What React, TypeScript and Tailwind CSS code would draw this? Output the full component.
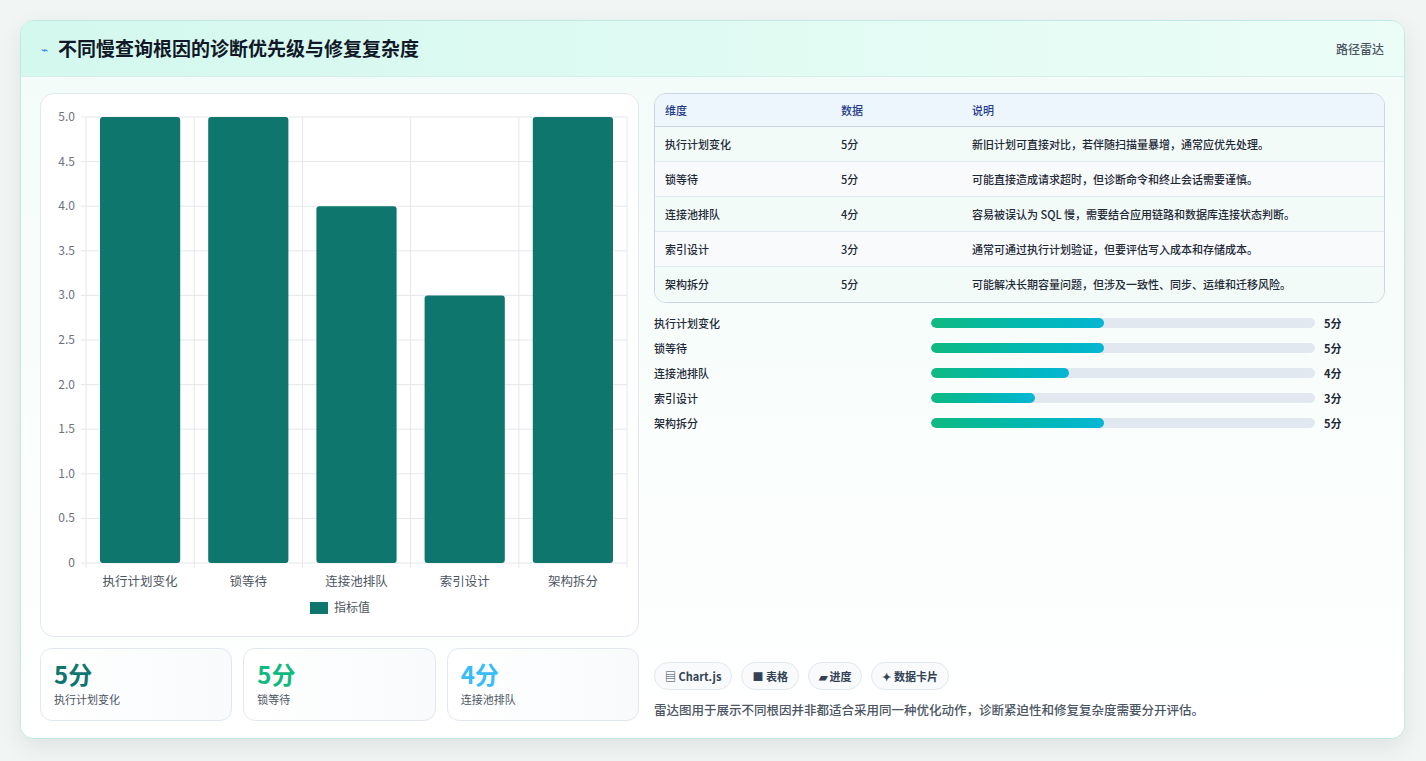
const ROWS = [
  { name: "执行计划变化", v: 5, desc: "新旧计划可直接对比，若伴随扫描量暴增，通常应优先处理。" },
  { name: "锁等待", v: 5, desc: "可能直接造成请求超时，但诊断命令和终止会话需要谨慎。" },
  { name: "连接池排队", v: 4, desc: "容易被误认为 SQL 慢，需要结合应用链路和数据库连接状态判断。" },
  { name: "索引设计", v: 3, desc: "通常可通过执行计划验证，但要评估写入成本和存储成本。" },
  { name: "架构拆分", v: 5, desc: "可能解决长期容量问题，但涉及一致性、同步、运维和迁移风险。" },
];

const FONT = { fontFamily: '"Noto Sans CJK SC", "Noto Sans", sans-serif' };

function Chart() {
  const W = 596, H = 543;
  const x0 = 45, x1 = 586, yTop = 23, yBot = 469;
  const step = (x1 - x0) / 5;
  const ticks = [0, 0.5, 1, 1.5, 2, 2.5, 3, 3.5, 4, 4.5, 5];
  const y = (v: number) => yBot - (v / 5) * (yBot - yTop);
  return (
    <svg width={W} height={H} className="block">
      {ticks.map((t) => (
        <g key={t}>
          <line x1={x0 - 5} x2={x1} y1={y(t)} y2={y(t)} stroke="#e5e7eb" />
          <text x={x0 - 11} y={y(t) + 4} textAnchor="end" fontSize="12" fill="#6b7280" style={FONT}>
            {t.toFixed(t === 0 ? 0 : 1)}
          </text>
        </g>
      ))}
      {[0, 1, 2, 3, 4, 5].map((i) => (
        <line key={i} x1={x0 + i * step} x2={x0 + i * step} y1={yTop} y2={yBot + 5} stroke="#e5e7eb" />
      ))}
      {ROWS.map((r, i) => (
        <g key={r.name}>
          <rect x={x0 + i * step + 14} y={y(r.v)} width={step - 28} height={yBot - y(r.v)} rx="3" fill="#0f766e" />
          <text x={x0 + i * step + step / 2} y={yBot + 23} textAnchor="middle" fontSize="12.5" fill="#4b5563" style={FONT}>
            {r.name}
          </text>
        </g>
      ))}
      <rect x={269} y={508} width={18} height={12} fill="#0f766e" />
      <text x={293} y={518} fontSize="12" fill="#4b5563" style={FONT}>指标值</text>
    </svg>
  );
}

export default function App() {
  return (
    <div className="w-[1426px] h-[761px] bg-[#f1f5f4] pt-[20px] px-[20px]" style={FONT}>
      <div className="w-[1385px] h-[719px] rounded-[14px] border border-[#bfe9e2] bg-white shadow-[0_8px_24px_rgba(0,0,0,0.08)] overflow-hidden">
        <div className="h-[56px] flex items-center justify-between px-[20px] bg-gradient-to-r from-[#d3f8ee] to-[#ecfdf7] border-b border-[#d8eeea]">
          <div className="flex items-center gap-[10px]">
            <span className="text-[#3b82f6] text-[12px]">⌁</span>
            <h1 className="text-[19px] font-bold text-[#111827]">不同慢查询根因的诊断优先级与修复复杂度</h1>
          </div>
          <span className="text-[12px] text-[#4b5563] font-medium">路径雷达</span>
        </div>
        <div className="flex gap-[15px] px-[19px] pt-[16px] bg-gradient-to-b from-[#f3fcf9] to-white h-[663px]">
          <div className="w-[599px] flex flex-col gap-[11px]">
            <div className="h-[544px] rounded-[14px] border border-[#e2e8f0] bg-white overflow-hidden">
              <Chart />
            </div>
            <div className="grid grid-cols-3 gap-[11px]">
              {[
                { v: "5分", c: "text-[#0f766e]", n: "执行计划变化" },
                { v: "5分", c: "text-[#10b981]", n: "锁等待" },
                { v: "4分", c: "text-[#38bdf8]", n: "连接池排队" },
              ].map((s) => (
                <div key={s.n} className="h-[73px] rounded-[12px] border border-[#e2e8f0] bg-gradient-to-r from-white to-[#f8fafc] px-[13px] pt-[10px]">
                  <div className={`text-[24px] font-bold leading-[30px] ${s.c}`}>{s.v}</div>
                  <div className="text-[11px] text-[#4b5563] mt-[2px]">{s.n}</div>
                </div>
              ))}
            </div>
          </div>
          <div className="flex-1 flex flex-col">
            <div className="rounded-[12px] border border-[#cbd5e1] overflow-hidden text-[11px] font-medium">
              <div className="grid grid-cols-[176px_131px_1fr] h-[33px] items-center bg-[#eef6fd] px-[10px] text-[#1e3a8a] border-b border-[#cbd5e1]">
                <span>维度</span><span>数据</span><span>说明</span>
              </div>
              {ROWS.map((r, i) => (
                <div key={r.name} className={`grid grid-cols-[176px_131px_1fr] h-[35px] items-center px-[10px] text-[#1f2937] ${i < 4 ? "border-b border-[#e2e8f0]" : ""} ${i % 2 ? "bg-[#f8fafc]" : "bg-[#f2fbf7]"}`}>
                  <span>{r.name}</span><span>{r.v}分</span><span>{r.desc}</span>
                </div>
              ))}
            </div>
            <div className="mt-[12px] flex flex-col gap-[9px] text-[11px] font-medium text-[#1f2937]">
              {ROWS.map((r) => (
                <div key={r.name} className="flex items-center h-[16px]">
                  <span className="w-[277px]">{r.name}</span>
                  <div className="w-[384px] h-[10px] rounded-full bg-[#e2e8f0] overflow-hidden">
                    <div className="h-full rounded-full bg-gradient-to-r from-[#10b981] to-[#06b6d4]" style={{ width: `${r.v * 9}%` }} />
                  </div>
                  <span className="ml-[9px] font-bold">{r.v}分</span>
                </div>
              ))}
            </div>
            <div className="flex-1" />
            <div className="flex gap-[9px] text-[11px] font-semibold text-[#334155]">
              {["▤ Chart.js", "■ 表格", "▰ 进度", "✦ 数据卡片"].map((c) => (
                <span key={c} className="h-[28px] px-[10px] rounded-full border border-[#e2e8f0] bg-[#f8fafc] flex items-center">{c}</span>
              ))}
            </div>
            <p className="mt-[11px] mb-[20px] text-[12.5px] font-medium text-[#4b5563]">雷达图用于展示不同根因并非都适合采用同一种优化动作，诊断紧迫性和修复复杂度需要分开评估。</p>
          </div>
        </div>
      </div>
    </div>
  );
}
